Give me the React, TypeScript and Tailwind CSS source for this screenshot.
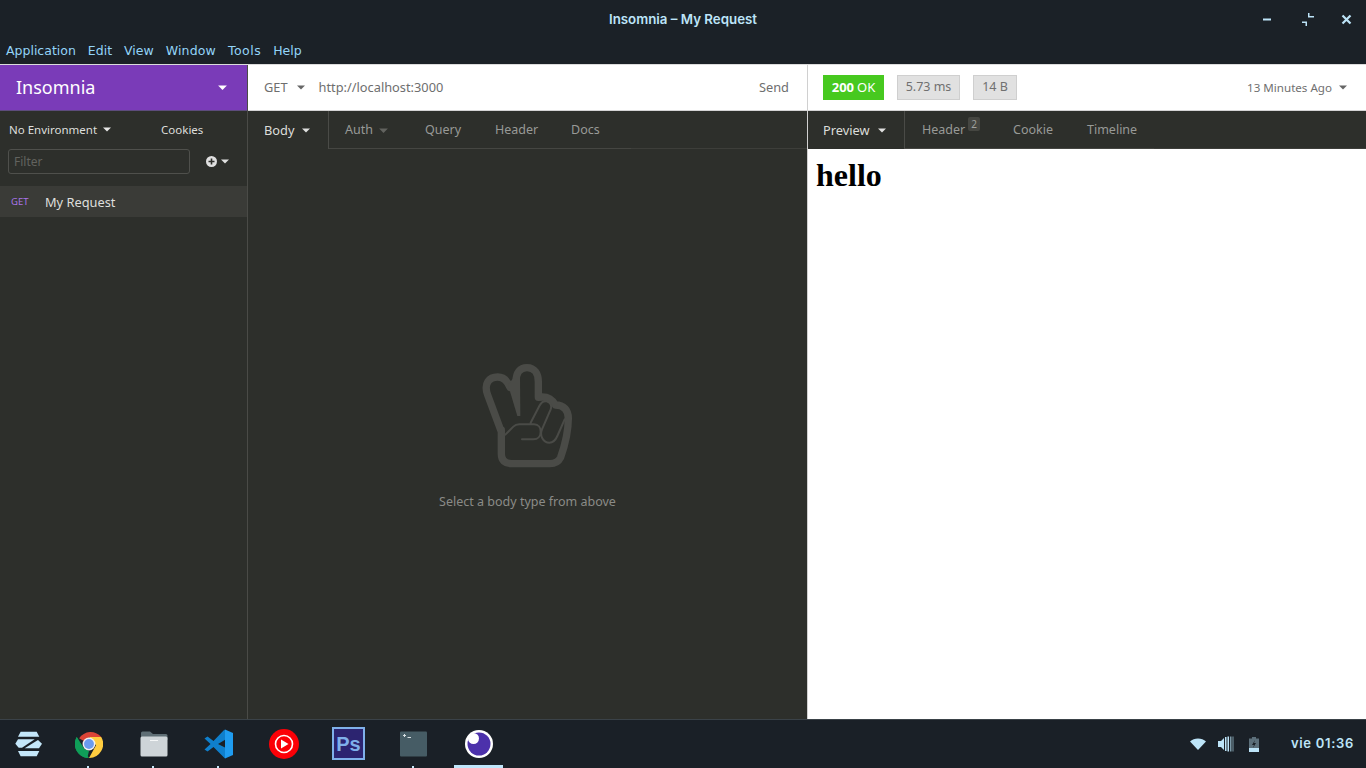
import React from "react";

const Caret = ({ c = "#e0e0e0", w = 8, cls = "" }: { c?: string; w?: number; cls?: string }) => (
  <svg width={w} height={w / 2 + 1} viewBox="0 0 8 5" className={"shrink-0 " + cls}>
    <path d="M0 .5h8L4 4.500z" fill={c} />
  </svg>
);

const Hand = () => (
  <svg width="200" height="170" viewBox="0 0 600 510" fill="none" stroke="#4a4b47" strokeLinecap="round" strokeLinejoin="round">
    <path strokeWidth="22" d="M214 245 L173 135 C160 100 178 81 203 81 C222 81 232 92 240 112 M258 95 C258 68 270 53 291 53 C314 53 325 72 325 95 L325 142 C350 138 365 145 376 165 C402 165 415 180 415 205 C415 250 405 285 392 322 C386 334 376 341 360 341 L245 341 C225 341 214 331 214 312 L214 240" />
    <path stroke="none" fill="#4a4b47" d="M234 104 L250 84 L270 84 L271 198 L262 198 Z" />
    <path strokeWidth="6" d="M226 254 L250 230 C255 225 260 223 268 223 L312 223 C326 223 332 234 332 245 C332 258 324 268 310 268 L276 268 M302 218 L328 168 C334 156 342 152 350 154 C362 157 366 168 362 178 L336 238 C328 258 340 278 358 278 C368 278 376 272 382 258 L404 208" />
  </svg>
);

const Chrome = () => (
  <svg width="28" height="28" viewBox="0 0 48 48">
    <path fill="#db4437" d="M24 24 7 14A24 24 0 0 1 45 12H24z" />
    <path fill="#0f9d58" d="M24 48A24 24 0 0 1 3 12l13 24 8 12z" />
    <path fill="#ffcd40" d="M45 12A24 24 0 0 1 24 48l12-22-12-14z" />
    <path fill="#0f9d58" d="M3 12 16 32l8 4-3 12A24 24 0 0 1 3 12z" />
    <circle cx="24" cy="24" r="11" fill="#f1f1f1" />
    <circle cx="24" cy="24" r="8.500" fill="#6a9bee" />
  </svg>
);

const Files = () => (
  <svg width="28" height="28" viewBox="0 0 28 28">
    <path fill="#5f6e75" d="M1 3a1.500 1.500 0 0 1 1.500-1.500H10L13 4h13a1.500 1.500 0 0 1 1.500 1.500V10H1z" />
    <rect x="0.500" y="6.500" width="27" height="20" rx="1.500" fill="#ced4d8" />
    <rect x="10" y="10" width="8" height="1" fill="#f4f6f7" />
  </svg>
);

const VSCode = () => (
  <svg width="30" height="30" viewBox="0 0 30 30">
    <path fill="#0f7fcc" d="M20.500 0.500 9.500 12 3.500 7.500 0.500 9.500 6.500 15l-6 5.500 3 2 6-4.500L21 29.500 24 20l-10-5 10-6z" />
    <path fill="#1f9cf0" d="M21 0.500 29 4v22l-8 3.500V21l0-12z" />
  </svg>
);

const YT = () => (
  <svg width="30" height="30" viewBox="0 0 30 30">
    <circle cx="15" cy="15" r="15" fill="#fb0007" />
    <circle cx="15" cy="15" r="8.500" fill="none" stroke="#fff" strokeWidth="1.600" />
    <path fill="#fff" d="M12 10.500v9l7.500-4.500z" />
  </svg>
);

const Terminal = () => (
  <svg width="27" height="26" viewBox="0 0 27 26">
    <rect width="27" height="25" y="0.500" rx="1" fill="#465c65" />
    <path d="M3 4.500h3M4.500 3v3" stroke="#d6dfe2" strokeWidth="1" />
    <rect x="7.500" y="6" width="3.500" height="1" fill="#d6dfe2" />
  </svg>
);

const InsomniaLogo = () => (
  <svg width="30" height="30" viewBox="0 0 30 30">
    <circle cx="15" cy="15" r="14" fill="#fff" />
    <circle cx="15" cy="15" r="11.500" fill="#4c31ab" />
    <circle cx="9.500" cy="9.500" r="5.500" fill="#fff" />
  </svg>
);

const Zorin = () => (
  <svg width="40" height="36" viewBox="0 0 120 108" fill="#c4e7fa">
    <path d="M38 20H86L94 35H30z" />
    <path d="M30 43H80L42 68H32L22 56z" />
    <path d="M90 45 102 56 93 70H50z" />
    <path d="M30 78H94L86 94H38z" />
  </svg>
);

const Slot = ({ children, dot, active }: { children: React.ReactNode; dot?: boolean; active?: boolean }) => (
  <div className="relative flex h-full w-[65px] items-center justify-center pb-[1px]">
    {children}
    {dot && <span className="absolute bottom-0 left-[31px] h-[2px] w-[2px] bg-[#c4e7fa]" />}
    {active && <span className="absolute bottom-0 left-[8px] h-[3px] w-[49px] bg-[#bfe6fb]" />}
  </div>
);

const Tab = ({ children, w, cls = "" }: { children: React.ReactNode; w: string; cls?: string }) => (
  <div className={"flex h-full items-center border-b border-[#454642] pt-[2px] text-[12.500px] text-[#989a97] " + w + " " + cls}>{children}</div>
);

export default function App() {
  const sans = "font-['Noto_Sans',sans-serif]";
  return (
    <div className={"flex h-[768px] w-[1366px] flex-col overflow-hidden bg-[#2d2f2b] text-[13px] " + sans}>
      {/* title bar */}
      <div className="relative flex h-[39px] shrink-0 items-center justify-center bg-[#1b2127] font-['Inter',sans-serif] text-[13.300px] font-semibold text-[#bde4f8]">
        Insomnia – My Request
        <div className="absolute right-[14px] top-[13px] flex items-center gap-[26px]">
          <svg width="13" height="13" viewBox="0 0 13 13" fill="#bde4f8"><rect x="1" y="5.500" width="8" height="2" /></svg>
          <svg width="14" height="13" viewBox="0 0 14 13" fill="#bde4f8"><path d="M7 0h1.500v3H13v1.500H7zM1 8.500h5V14H4.500v-4H1z" /></svg>
          <svg width="11" height="11" viewBox="0 0 11 11" stroke="#bde4f8" strokeWidth="2.200"><path d="M1.500 1.500l8 8M9.500 1.500l-8 8" /></svg>
        </div>
      </div>
      {/* menu */}
      <div className="flex h-[25px] shrink-0 items-center gap-[12px] bg-[#1b2127] pl-[6px] pr-2 font-['DejaVu_Sans',sans-serif] text-[12.500px] text-[#93d4f8]">
        <span>Application</span><span>Edit</span><span>View</span><span className="tracking-[0.15px]">Window</span><span className="tracking-[0.5px]">Tools</span><span>Help</span>
      </div>
      {/* main */}
      <div className="flex min-h-0 flex-1 border-t border-[#dcdcdc]">
        {/* sidebar */}
        <div className="flex w-[248px] shrink-0 flex-col border-r border-[#4a4b47]">
          <div className="flex h-[46px] shrink-0 items-center justify-between border-b border-[#5d4c7c] bg-[#7a3bb8] pl-[16px] pr-[20px] text-[18px] text-white">
            <span>Insomnia</span>
            <Caret c="#fff" w={9} />
          </div>
          <div className="flex h-[37px] shrink-0 items-center pl-[9px] text-[11.500px] text-[#dedfdc]">
            <span>No Environment</span>
            <Caret cls="ml-[6px]" c="#e8e8e8" />
            <span className="ml-[50px]">Cookies</span>
          </div>
          <div className="mt-[1px] flex h-[25px] shrink-0 items-center pl-[8px]">
            <div className="flex h-[25px] w-[182px] items-center rounded-[3px] border border-[#4f504c] pl-[5px] text-[12px] text-[#62635f]">Filter</div>
            <svg width="11" height="11" viewBox="0 0 11 11" className="ml-[16px]"><circle cx="5.500" cy="5.500" r="5.500" fill="#e0e0e0" /><path d="M5.500 2.500v6M2.500 5.500h6" stroke="#2d2e2a" strokeWidth="1.600" /></svg>
            <Caret cls="ml-[4px]" c="#e0e0e0" />
          </div>
          <div className="mt-[12px] flex h-[31px] shrink-0 items-center bg-[#3a3b37] pl-[11px] pt-[2px] text-[12.800px] text-[#dedfdc]">
            <span className="w-[34px] text-[9.500px] text-[#a974e8]">GET</span>
            <span>My Request</span>
          </div>
        </div>
        {/* request pane */}
        <div className="flex w-[560px] shrink-0 flex-col border-r border-[#d0d0d0]">
          <div className="flex h-[46px] shrink-0 items-center border-b border-[#d4d4d4] bg-white pl-[16px] pr-[18px] text-[#6e6e6e]">
            <span className="text-[12.800px]">GET</span>
            <Caret cls="ml-[9px]" c="#666" />
            <span className="ml-[14px] text-[12.800px]">http://localhost:3000</span>
            <span className="ml-auto text-[12.800px]">Send</span>
          </div>
          <div className="flex h-[38px] shrink-0">
            <div className="flex h-full w-[81px] items-center gap-[8px] border-r border-[#4a4b47] pl-[16px] pt-[1px] text-[12.800px] text-[#dcddda]">Body<Caret /></div>
            <Tab w="w-[96px]" cls="gap-[6px] pl-[16px]">Auth<Caret c="#62635f" w={9} /></Tab>
            <Tab w="w-[70px]">Query</Tab>
            <Tab w="w-[76px]">Header</Tab>
            <Tab w="w-[60px]">Docs</Tab>
            <div className="flex-1 border-b border-[#3d3e3a]" />
          </div>
          <div className="flex flex-1 flex-col items-center pt-[201px] text-[#8a8b87]">
            <div className="ml-[5px] h-[170px]"><Hand /></div>
            <span className="-mt-[27px] text-[12.500px]">Select a body type from above</span>
          </div>
        </div>
        {/* response pane */}
        <div className="flex min-w-0 flex-1 flex-col">
          <div className="flex h-[46px] shrink-0 items-center border-b border-[#d4d4d4] bg-white pl-[15px] pr-[19px] text-[#707070]">
            <span className="flex h-[25px] w-[61px] items-center justify-center gap-[3px] bg-[#47c91f] text-[13px] text-white"><b>200</b>OK</span>
            <span className="ml-[13px] flex h-[25px] w-[63px] items-center justify-center border border-[#cfcfcf] bg-[#e1e1e1] text-[12.500px]">5.73 ms</span>
            <span className="ml-[13px] flex h-[25px] w-[44px] items-center justify-center border border-[#cfcfcf] bg-[#e1e1e1] text-[12.500px]">14 B</span>
            <span className="ml-auto text-[11.600px]">13 Minutes Ago</span>
            <Caret cls="ml-[7px]" c="#666" />
          </div>
          <div className="flex h-[38px] shrink-0">
            <div className="flex h-full w-[97px] items-center gap-[8px] border-r border-[#4a4b47] pl-[15px] pt-[1px] text-[12.800px] text-[#dcddda]">Preview<Caret /></div>
            <Tab w="w-[95px]" cls="border-[#3d3e3a] pl-[17px]"><span className="flex items-start">Header<span className="-mt-[4px] ml-[3px] rounded-[2px] bg-[#454641] px-[3px] text-[10px] leading-[14px] text-[#a0a19e]">2</span></span></Tab>
            <Tab w="w-[74px]" cls="border-[#3d3e3a] pl-[13px]">Cookie</Tab>
            <Tab w="w-[80px]" cls="border-[#3d3e3a] pl-[13px]">Timeline</Tab>
            <div className="flex-1 border-b border-[#3d3e3a]" />
          </div>
          <div className="flex-1 bg-white pl-[8px] pt-[8px]">
            <h1 className="font-['Liberation_Serif',serif] text-[32px] font-bold leading-[37px] text-black">hello</h1>
          </div>
        </div>
      </div>
      {/* taskbar */}
      <div className="flex h-[49px] shrink-0 items-center border-t border-[#3a4248] bg-[#1a2027]">
        <div className="flex h-full w-[56px] items-center justify-center pb-[3px]"><Zorin /></div>
        <Slot dot><Chrome /></Slot>
        <Slot dot><Files /></Slot>
        <Slot dot><VSCode /></Slot>
        <Slot><YT /></Slot>
        <Slot><div className="flex h-[33px] w-[33px] items-center justify-center border-[2px] border-[#7fb0ea] bg-[#2c2470] font-['Liberation_Sans',sans-serif] text-[20px] font-bold leading-none text-[#7fb0ea]">Ps</div></Slot>
        <Slot dot><Terminal /></Slot>
        <Slot active><InsomniaLogo /></Slot>
        <div className="flex-1" />
        <svg width="16" height="12" viewBox="0 0 16 12" className="mr-[12px]"><path d="M0 3.500C4-.5 12-.5 16 3.500L8 12z" fill="#bde4f8" /></svg>
        <svg width="16" height="16" viewBox="0 0 16 16" className="mr-[15px]" fill="#bde4f8"><path d="M0 5h3l3-3v12l-3-3H0z" /><rect x="7" y="1" width="1.500" height="14" /><rect x="9.500" y="0.500" width="1.500" height="15" /><rect x="12" y="0.500" width="1.500" height="15" fill="#7d99a8" /><rect x="14.500" y="0.500" width="1" height="15" fill="#7d99a8" /></svg>
        <svg width="10" height="15" viewBox="0 0 10 15" className="mr-[32px]"><path d="M3 0h4v1.500h3V15H0V1.500h3z" fill="#5c6f7a" /><rect y="11" width="10" height="4" fill="#bde4f8" /><path d="M6 3 3 8h2L4 11l3-5H5z" fill="#1a2027" /></svg>
        <span className="mr-[12px] font-['Inter',sans-serif] text-[13px] font-semibold tracking-[0.7px] text-[#bde4f8]">vie 01:36</span>
      </div>
    </div>
  );
}
